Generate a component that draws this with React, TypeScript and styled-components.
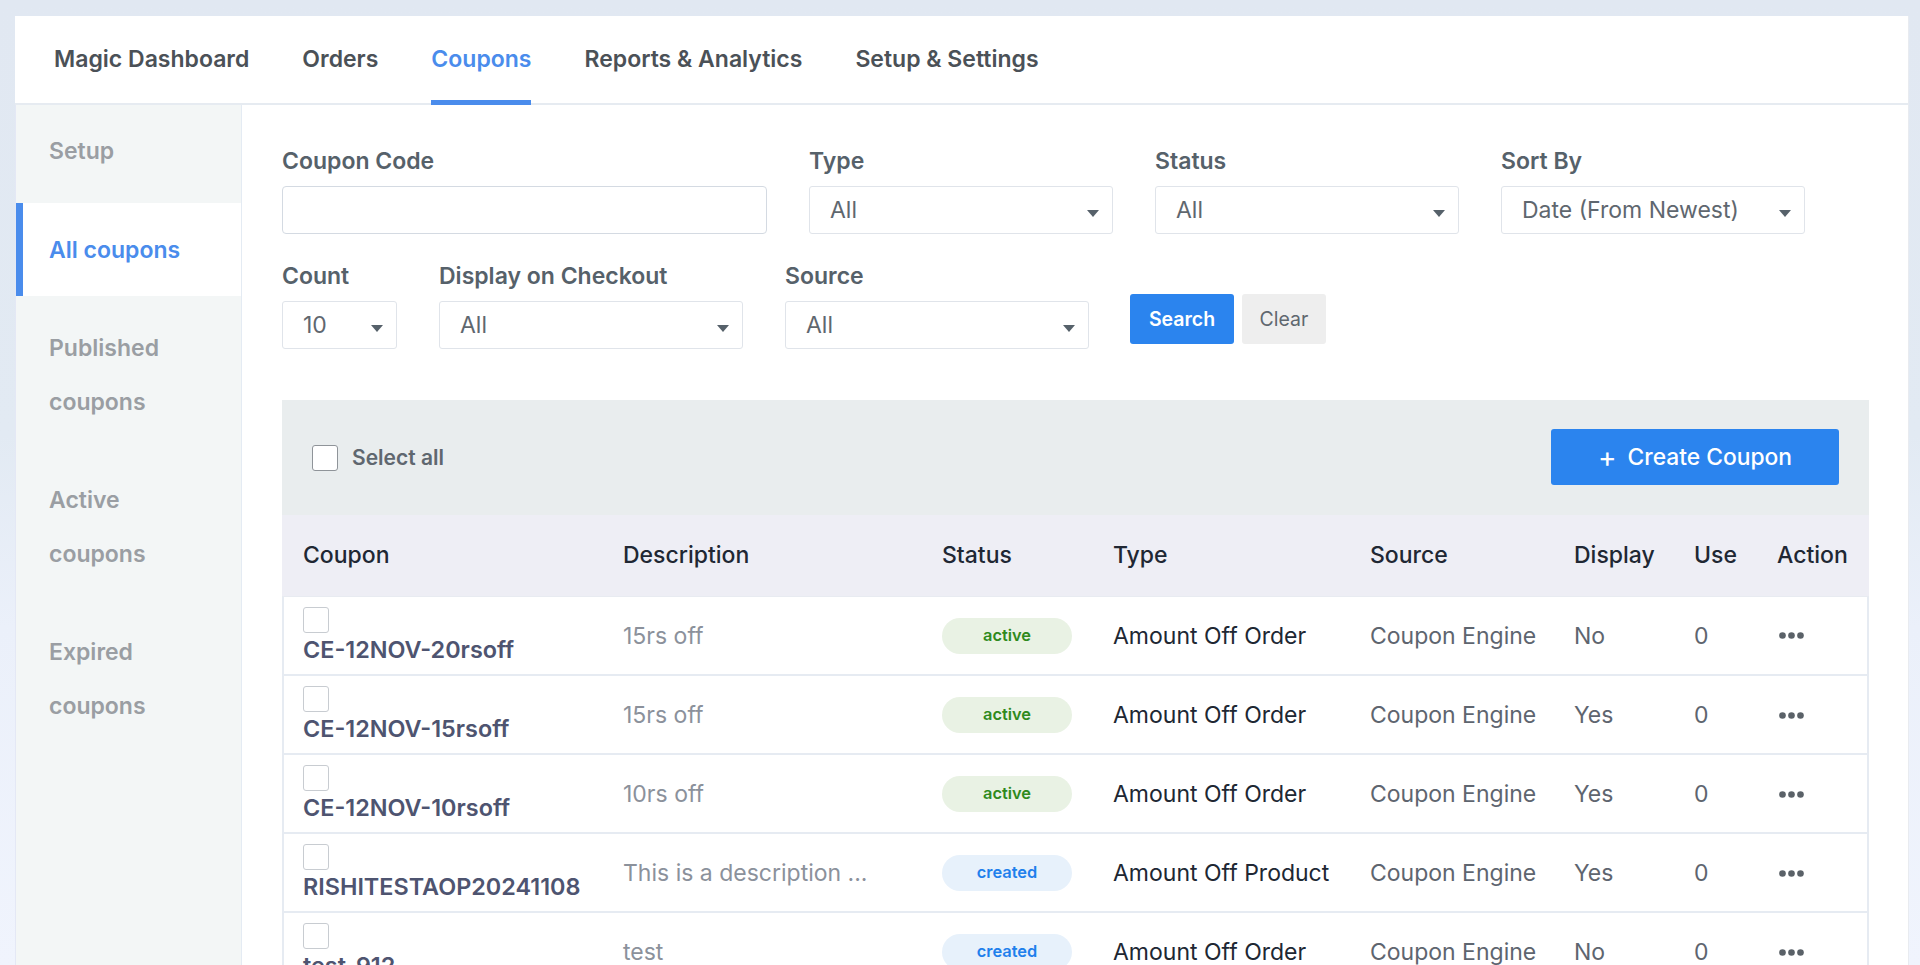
import styled, { createGlobalStyle } from 'styled-components';

const GlobalStyle = createGlobalStyle`
  html, body {
    height: 100%;
    margin: 0;
    overflow: hidden;
    background: linear-gradient(180deg, #e1e8f2 0%, #e2eaf3 45%, #ebf0fa 65%, #f0f4fd 100%);
    font-family: Inter, "Liberation Sans", sans-serif;
  }

  * {
    box-sizing: border-box;
  }
`;

const navItems = ['Magic Dashboard', 'Orders', 'Coupons', 'Reports & Analytics', 'Setup & Settings'];

const sideItems = [
  { label: 'Setup' },
  { label: 'All coupons', active: true },
  { label: 'Published coupons', wrap: true },
  { label: 'Active coupons', wrap: true },
  { label: 'Expired coupons', wrap: true },
];

const columns = ['Coupon', 'Description', 'Status', 'Type', 'Source', 'Display', 'Use', 'Action'];
const columnWidths = [320, 319, 171, 257, 204, 120, 83, 113];

const rows = [
  { code: 'CE-12NOV-20rsoff', desc: '15rs off', status: 'active', type: 'Amount Off Order', display: 'No' },
  { code: 'CE-12NOV-15rsoff', desc: '15rs off', status: 'active', type: 'Amount Off Order', display: 'Yes' },
  { code: 'CE-12NOV-10rsoff', desc: '10rs off', status: 'active', type: 'Amount Off Order', display: 'Yes' },
  { code: 'RISHITESTAOP20241108', desc: 'This is a description ...', status: 'created', type: 'Amount Off Product', display: 'Yes' },
  { code: 'test_912', desc: 'test', status: 'created', type: 'Amount Off Order', display: 'No' },
];

export default function App() {
  return (
    <>
      <GlobalStyle />
      <Page>
        <Card>
          <TopNav>
            {navItems.map((item) => (
              <NavLink key={item} $active={item === 'Coupons'}>
                {item}
              </NavLink>
            ))}
          </TopNav>
          <Body>
            <Sidebar>
              {sideItems.map((item) => (
                <SideItem key={item.label} $active={item.active} $wrap={item.wrap}>
                  <span>{item.label}</span>
                </SideItem>
              ))}
            </Sidebar>
            <Main>
              <FilterRow>
                <Field $width={485}>
                  <Label>Coupon Code</Label>
                  <TextInput />
                </Field>
                <SelectField label="Type" value="All" width={304} />
                <SelectField label="Status" value="All" width={304} />
                <SelectField label="Sort By" value="Date (From Newest)" width={304} />
              </FilterRow>
              <FilterRow $second>
                <SelectField label="Count" value="10" width={115} />
                <SelectField label="Display on Checkout" value="All" width={304} />
                <SelectField label="Source" value="All" width={304} />
                <ButtonGroup>
                  <SearchButton>Search</SearchButton>
                  <ClearButton>Clear</ClearButton>
                </ButtonGroup>
              </FilterRow>
              <Toolbar>
                <SelectAll>
                  <CheckBox />
                  Select all
                </SelectAll>
                <CreateButton>
                  <span>+</span> Create Coupon
                </CreateButton>
              </Toolbar>
              <Table>
                <colgroup>
                  {columnWidths.map((w, i) => (
                    <col key={i} width={w} />
                  ))}
                </colgroup>
                <thead>
                  <tr>
                    {columns.map((c) => (
                      <Th key={c}>{c}</Th>
                    ))}
                  </tr>
                </thead>
                <tbody>
                  {rows.map((row) => (
                    <tr key={row.code}>
                      <Td>
                        <RowCheck />
                        <Code>{row.code}</Code>
                      </Td>
                      <Td $muted $light>{row.desc}</Td>
                      <Td>
                        <Badge $status={row.status}>{row.status}</Badge>
                      </Td>
                      <Td>{row.type}</Td>
                      <Td $muted>Coupon Engine</Td>
                      <Td $muted>{row.display}</Td>
                      <Td $muted>0</Td>
                      <Td>
                        <Dots viewBox="0 0 25 7">
                          <circle cx="3.5" cy="3.5" r="3.3" />
                          <circle cx="12.5" cy="3.5" r="3.3" />
                          <circle cx="21.5" cy="3.5" r="3.3" />
                        </Dots>
                      </Td>
                    </tr>
                  ))}
                </tbody>
              </Table>
            </Main>
          </Body>
        </Card>
      </Page>
    </>
  );
}

function SelectField({ label, value, width }: { label: string; value: string; width: number }) {
  return (
    <Field $width={width}>
      <Label>{label}</Label>
      <SelectBox>
        {value}
        <Caret />
      </SelectBox>
    </Field>
  );
}

const Page = styled.div`
  height: 965px;
  padding: 16px 11px 0 15px;
  overflow: hidden;
`;

const Card = styled.div`
  height: 100%;
  background: #fff;
  border-right: 1px solid #e8ebf0;
  display: flex;
  flex-direction: column;
`;

const TopNav = styled.nav`
  height: 89px;
  padding-left: 39px;
  display: flex;
  gap: 53px;
  border-bottom: 2px solid #e6ebf1;
`;

const NavLink = styled.a<{ $active?: boolean }>`
  height: 89px;
  line-height: 86px;
  font-size: 23px;
  font-weight: 600;
  color: ${({ $active }) => ($active ? '#4a8cec' : '#4b5157')};
  border-bottom: 5px solid ${({ $active }) => ($active ? '#4a8cec' : 'transparent')};
`;

const Body = styled.div`
  flex: 1;
  display: flex;
  min-height: 0;
`;

const Sidebar = styled.aside`
  width: 227px;
  flex-shrink: 0;
  background: #f3f6f6;
  border-left: 1px solid #e4e8f5;
  border-right: 1px solid #e4ebf3;
`;

const SideItem = styled.div<{ $active?: boolean; $wrap?: boolean }>`
  padding: ${({ $wrap, $active }) => ($wrap ? '25px 40px 19px 26px' : $active ? '0 20px 0 26px' : '0 20px 7px 26px')};
  height: ${({ $wrap, $active }) => ($wrap ? 'auto' : $active ? '93px' : '98px')};
  display: flex;
  align-items: ${({ $wrap }) => ($wrap ? 'flex-start' : 'center')};
  font-size: 23px;
  font-weight: 600;
  line-height: 54px;
  color: ${({ $active }) => ($active ? '#4a8cec' : '#9a9ea3')};
  background: ${({ $active }) => ($active ? '#fff' : 'transparent')};
  border-left: 7px solid ${({ $active }) => ($active ? '#4a8cec' : 'transparent')};
`;

const Main = styled.main`
  flex: 1;
  min-width: 0;
  padding: 0 39px 0 40px;
`;

const FilterRow = styled.div<{ $second?: boolean }>`
  display: flex;
  gap: 42px;
  padding-top: ${({ $second }) => ($second ? '29px' : '43px')};
`;

const Field = styled.div<{ $width: number }>`
  width: ${({ $width }) => $width}px;
`;

const Label = styled.div`
  font-size: 23px;
  font-weight: 600;
  line-height: 26px;
  margin-bottom: 12px;
  color: #56616a;
`;

const TextInput = styled.div`
  height: 48px;
  border: 1.5px solid #d4dae2;
  border-radius: 4px;
`;

const SelectBox = styled.div`
  position: relative;
  height: 48px;
  line-height: 47px;
  padding-left: 20px;
  border: 1.5px solid #e0e4ea;
  border-radius: 3px;
  font-size: 23px;
  color: #5f676f;
`;

const Caret = styled.i`
  position: absolute;
  right: 13px;
  top: 23px;
  border-left: 6px solid transparent;
  border-right: 6px solid transparent;
  border-top: 7px solid #56616a;
`;

const ButtonGroup = styled.div`
  display: flex;
  gap: 8px;
  padding-top: 31px;
  margin-left: -1px;
`;

const SearchButton = styled.button`
  width: 104px;
  height: 50px;
  border: none;
  border-radius: 3px;
  background: #2b84ee;
  color: #fff;
  font: 600 19.5px Inter, sans-serif;
`;

const ClearButton = styled.button`
  width: 84px;
  height: 50px;
  border: none;
  border-radius: 3px;
  background: #eeeeee;
  color: #5f676f;
  font: 400 19.5px Inter, sans-serif;
`;

const Toolbar = styled.div`
  margin-top: 51px;
  height: 115px;
  background: #e9edee;
  display: flex;
  align-items: center;
  justify-content: space-between;
  padding: 0 30px;
`;

const SelectAll = styled.label`
  display: flex;
  align-items: center;
  gap: 14px;
  font-size: 21px;
  font-weight: 600;
  color: #5f676f;
`;

const CheckBox = styled.span`
  width: 26px;
  height: 26px;
  background: #fff;
  border: 1.5px solid #8f9499;
  border-radius: 3px;
`;

const CreateButton = styled.button`
  width: 288px;
  height: 56px;
  margin-bottom: 2px;
  border: none;
  border-radius: 3px;
  background: #2b84ee;
  color: #fff;
  font: 500 22.8px Inter, sans-serif;
  display: flex;
  align-items: center;
  justify-content: center;
  gap: 11px;

  span {
    font-size: 28px;
    line-height: 1;
    font-weight: 400;
  }
`;

const Table = styled.table`
  width: 1587px;
  table-layout: fixed;
  border-collapse: collapse;
`;

const Th = styled.th`
  height: 81px;
  padding: 0 0 0 21px;
  background: #eeeef5;
  text-align: left;
  font-size: 23px;
  font-weight: 500;
  color: #202733;
  border-bottom: 1px solid #e8ebf1;
`;

const Td = styled.td<{ $muted?: boolean; $light?: boolean }>`
  height: 79px;
  padding: 1px 0 0 21px;
  font-size: 23px;
  white-space: nowrap;
  color: ${({ $muted, $light }) => ($light ? '#8b919b' : $muted ? '#5e656f' : '#202733')};
  border-bottom: 2px solid #e6ebf2;

  &:first-child {
    box-shadow: inset 2px 0 0 #e6ebf2;
  }

  &:last-child {
    box-shadow: inset -2px 0 0 #e6ebf2;
  }
`;

const RowCheck = styled.span`
  display: block;
  width: 26px;
  height: 26px;
  border: 1.5px solid #c8ccd1;
  border-radius: 3px;
`;

const Code = styled.div`
  margin-top: 2px;
  font-size: 23.4px;
  font-weight: 600;
  line-height: 30px;
  color: #4e5470;
`;

const Badge = styled.span<{ $status: string }>`
  display: block;
  width: 130px;
  height: 36px;
  line-height: 35px;
  text-align: center;
  border-radius: 18px;
  font-size: 16.4px;
  font-weight: 600;
  color: ${({ $status }) => ($status === 'active' ? '#2f8a1c' : '#1f80ec')};
  background: ${({ $status }) => ($status === 'active' ? '#e9f2e4' : '#e7f1fb')};
`;

const Dots = styled.svg`
  display: block;
  width: 25px;
  height: 7px;
  margin-left: 2px;
  fill: #5a6168;
`;
